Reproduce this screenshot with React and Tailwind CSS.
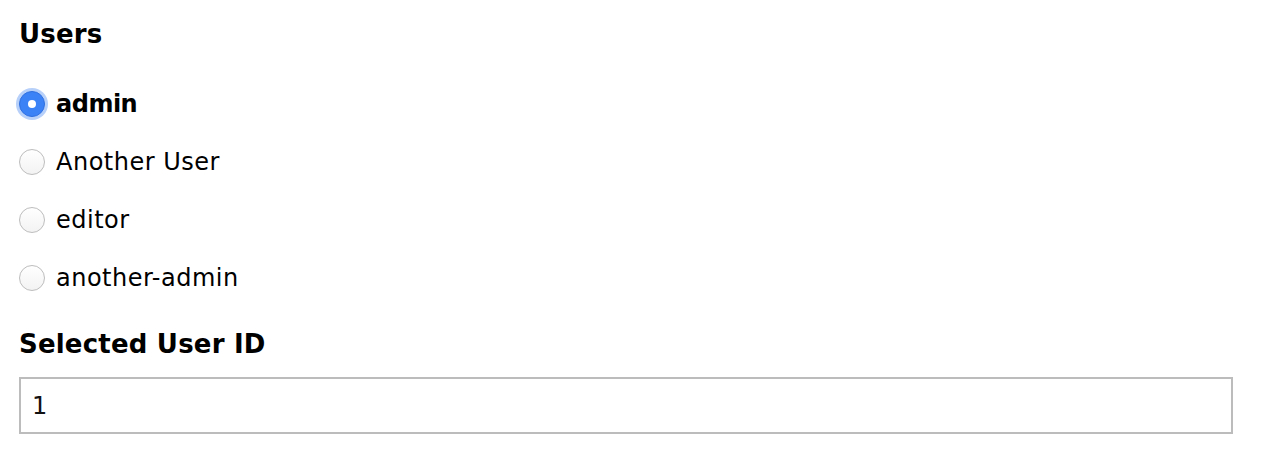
import { useState } from "react";

const users = [
  { id: 1, name: "admin" },
  { id: 2, name: "Another User" },
  { id: 3, name: "editor" },
  { id: 4, name: "another-admin" },
];

const Radio = ({ checked }) =>
  checked ? (
    <span className="w-[26px] h-[26px] rounded-full bg-[#3b82f6] border border-[#2f6fe0] shadow-[0_0_0_3px_rgba(96,150,245,0.45)] flex items-center justify-center shrink-0">
      <span className="w-[8px] h-[8px] rounded-full bg-white" />
    </span>
  ) : (
    <span className="w-[26px] h-[26px] rounded-full bg-gradient-to-b from-white to-[#f3f3f3] border border-[#bdbdbd] shrink-0" />
  );

export default function App() {
  const [selected, setSelected] = useState(1);

  return (
    <div
      className="bg-white w-[1280px] h-[472px] pl-[19px] pt-[15px] text-black"
      style={{ fontFamily: '"DejaVu Sans", sans-serif' }}
    >
      <h2 className="text-[26px] font-bold leading-[38px] tracking-[0.2px] mb-[32px]">Users</h2>
      <div className="flex flex-col gap-[20px]">
        {users.map((u) => (
          <label
            key={u.id}
            className="flex items-center gap-[11px] h-[38px] cursor-pointer"
            onClick={() => setSelected(u.id)}
          >
            <Radio checked={selected === u.id} />
            <span
              className={
                "text-[24px] " +
                (selected === u.id ? "font-bold tracking-[-0.5px]" : "tracking-[0.5px]")
              }
            >
              {u.name}
            </span>
          </label>
        ))}
      </div>
      <h2 className="text-[26px] font-bold leading-[38px] tracking-[0.2px] mt-[28px] mb-[14px]">
        Selected User ID
      </h2>
      <input
        readOnly
        value={selected}
        className="w-[1214px] h-[57px] border-2 border-[#bcbcbc] px-[11px] text-[24px] text-[#111] outline-none"
      />
    </div>
  );
}
